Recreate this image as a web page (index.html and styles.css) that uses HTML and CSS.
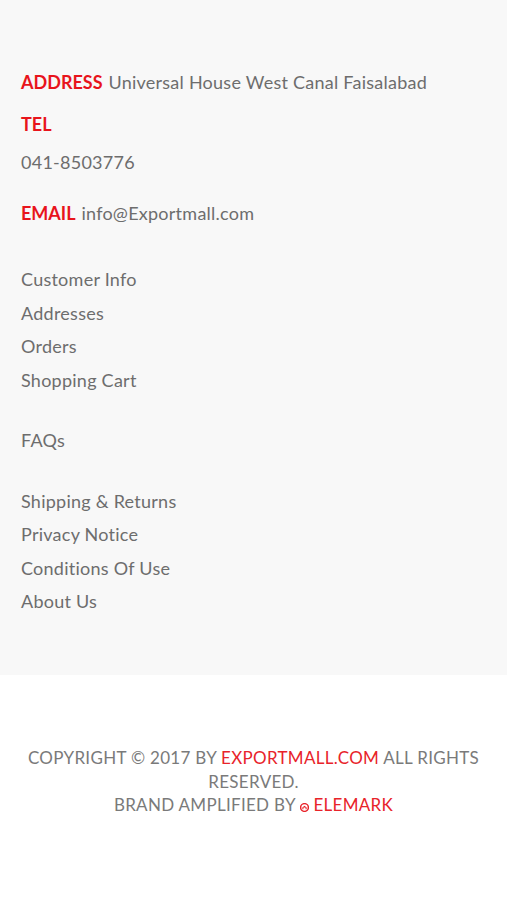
FILE: index.html
```html
<!DOCTYPE html>
<html>
<head>
<meta charset="utf-8">
<link rel="stylesheet" href="styles.css">
</head>
<body>
<section class="info">
  <div class="contact">
    <p class="line"><span class="label">ADDRESS</span> Universal House West Canal Faisalabad</p>
    <p class="line tel"><span class="label">TEL</span></p>
    <p class="line phone">041-8503776</p>
    <p class="line email"><span class="label">EMAIL</span> info@Exportmall.com</p>
  </div>
  <ul class="links first">
    <li>Customer Info</li>
    <li>Addresses</li>
    <li>Orders</li>
    <li>Shopping Cart</li>
  </ul>
  <ul class="links">
    <li>FAQs</li>
  </ul>
  <ul class="links">
    <li>Shipping &amp; Returns</li>
    <li>Privacy Notice</li>
    <li>Conditions Of Use</li>
    <li>About Us</li>
  </ul>
</section>
<footer class="footer">
  <p><span>COPYRIGHT © 2017 BY</span> <span class="red">EXPORTMALL.COM</span> <span>ALL RIGHTS</span> <span>RESERVED.</span><br><span>BRAND AMPLIFIED BY</span> <svg class="logo" viewBox="0 0 10 10" width="9" height="9"><circle cx="5" cy="5" r="4.3" fill="none" stroke="#e8232a" stroke-width="1.6"/><path d="M3.2 7V5.2L5 3.8L6.8 5.2V7" fill="none" stroke="#e8232a" stroke-width="1.2"/></svg> <span class="red">ELEMARK</span></p>
</footer>
</body>
</html>
```
FILE: styles.css
```css
html, body {
  margin: 0;
  padding: 0;
  background: #ffffff;
  font-family: Lato, "Open Sans", sans-serif;
}
.info {
  background: #f8f8f8;
  padding: 70px 21px 58px;
  height: 675px;
  box-sizing: border-box;
}
.contact {
  display: flex;
  flex-direction: column;
}
.line {
  margin: 0;
  font-size: 18px;
  line-height: 24px;
  color: #6d6d6d;
  letter-spacing: 0.25px;
}
.tel { margin-top: 18px; }
.phone { margin-top: 14px; }
.email { margin-top: 27px; }
.label {
  color: #e8141c;
  font-weight: 700;
  letter-spacing: 0;
  margin-right: 1px;
}
.links {
  list-style: none;
  margin: 27px 0 0;
  padding: 0;
}
.links.first { margin-top: 38px; }
.links li {
  font-size: 18px;
  line-height: 33.5px;
  color: #6d6d6d;
  letter-spacing: 0.25px;
}
.footer {
  text-align: center;
  padding: 71px 18px 0;
}
.footer p {
  margin: 0;
  font-size: 17px;
  line-height: 23.5px;
  color: #7a7a7a;
  letter-spacing: 0.3px;
}
.red { color: #e8232a; }
.logo { vertical-align: -1px; }
```
